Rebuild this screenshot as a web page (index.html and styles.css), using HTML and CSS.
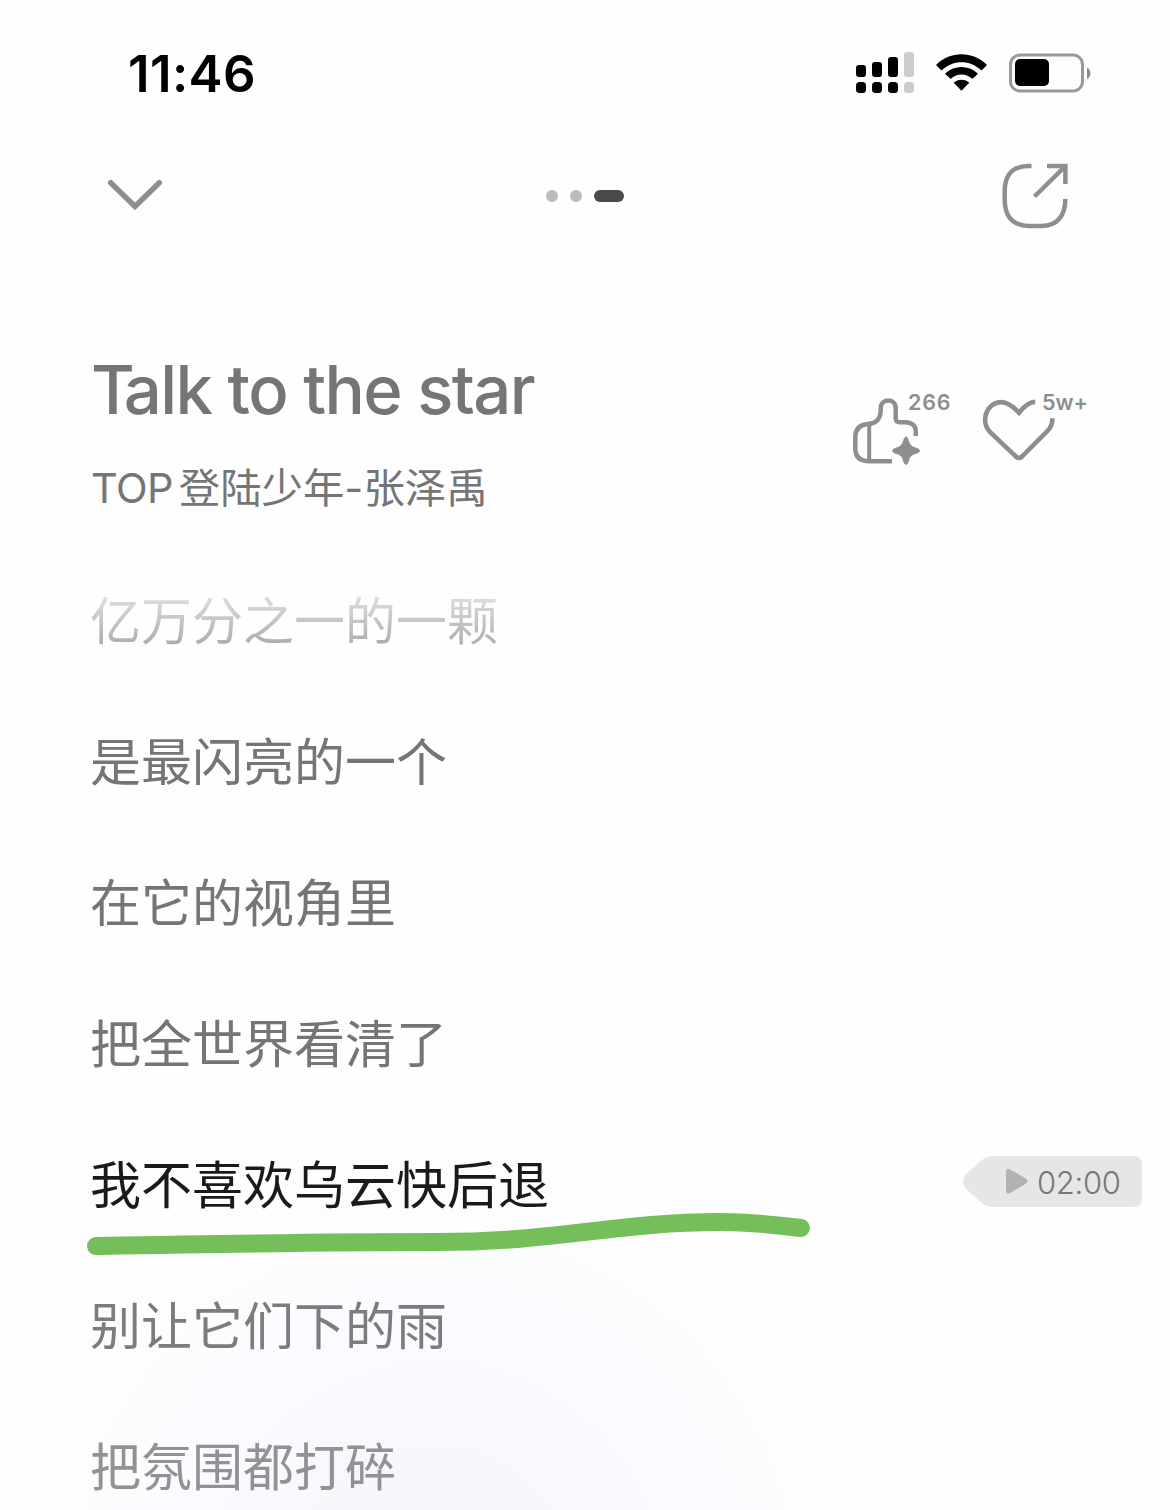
FILE: index.html
```
<!DOCTYPE html>
<html lang="zh-CN">
<head>
  <meta charset="UTF-8">
  <meta name="viewport" content="width=device-width, initial-scale=1.0">
  <title>Talk to the star</title>
  <link rel="stylesheet" href="styles.css">
</head>
<body>
  <div class="player">
    <div class="status-bar">
      <span class="time">11:46</span>
      <div class="status-icons">
        <svg class="signal" width="58" height="42" viewBox="0 0 58 42">
          <rect x="0" y="13" width="10" height="12" rx="3"/>
          <rect x="16" y="10" width="10" height="15" rx="3"/>
          <rect x="32" y="5" width="10" height="20" rx="3"/>
          <rect class="off" x="48" y="0" width="10" height="25" rx="3"/>
          <rect x="0" y="30" width="10" height="11" rx="3.5"/>
          <rect x="16" y="30" width="10" height="11" rx="3.5"/>
          <rect x="32" y="30" width="10" height="11" rx="3.5"/>
          <rect class="off" x="48" y="30" width="10" height="11" rx="3.5"/>
        </svg>
        <svg class="wifi" width="51" height="38" viewBox="0.5 0 51 38">
          <path d="M1 11.5Q0.5 11 1 10.4C15 -3.2 37 -3.2 51 10.4Q51.5 11 51 11.5L46.5 16Q46 16.4 45.4 16C34.5 5.6 17.5 5.6 6.6 16Q6 16.4 5.5 16Z"/>
          <path d="M10 20.3Q9.5 19.8 10 19.3C19 10.8 33 10.8 42 19.3Q42.5 19.8 42 20.3L37.3 24.6Q36.8 25 36.3 24.6C30.5 19.2 21.5 19.2 15.7 24.6Q15.2 25 14.7 24.6Z"/>
          <path d="M18.8 29.2Q18.3 28.6 18.9 28.1C23 24.8 29 24.8 33.1 28.1Q33.7 28.6 33.2 29.2L26.5 36.3Q26 36.7 25.5 36.3Z"/>
        </svg>
        <svg class="battery" width="83" height="40" viewBox="0 0 83 40">
          <rect x="1.5" y="2" width="72" height="36" rx="9.5" fill="none" stroke="#999" stroke-width="3"/>
          <rect x="6" y="6" width="34" height="27" rx="5" fill="#000"/>
          <path d="M78 14.5C82.5 16.5 82.5 24 78 26Z" fill="#8c8c8c"/>
        </svg>
      </div>
    </div>

    <div class="nav">
      <svg class="down" width="56" height="34" viewBox="0 0 56 34" fill="none" stroke="#8e8e8e" stroke-width="5.5" stroke-linecap="round">
        <path d="M3.7 3.7L28 27.5L52.3 3.7"/>
      </svg>
      <div class="pages">
        <i></i><i></i><i class="current"></i>
      </div>
      <svg class="share" width="66" height="66" viewBox="0 0 66 66" fill="none" stroke="#8e8e8e" stroke-width="4.5">
        <path d="M29.5 3H26C9.5 3.5 3 12 2.7 28V37C3 54.5 11 62.5 27 63H40C55 62.5 63 54 63.4 36"/>
        <path d="M45 3H63.4V21M63 3.5L32.5 33.5"/>
      </svg>
    </div>

    <div class="song">
      <div class="song-info">
        <h1><span class="cap">T</span>alk to the star</h1>
        <p><span class="latin">TOP</span>登陆少年-张泽禹</p>
      </div>
      <div class="actions">
        <div class="action like">
          <svg width="68" height="68" viewBox="0 0 68 68" fill="none" stroke="#8e8e8e" stroke-width="4.5">
            <path d="M39 63.2H15C6.5 63 2.5 58.5 2.3 51V39C2.5 30.5 6.5 26.5 15 26C23 25.5 27 22 27.7 13V10C28 0 42.5 0 42.7 10V20C42.7 23.5 44 24.2 47 24.2H52C60.5 24.5 64 28.5 62.5 38"/>
            <path d="M16.2 27V63" stroke-width="4"/>
            <path d="M53 39C54.2 39 55 41 55.3 42.5C56.5 47 58.5 49 63 50.2C65 50.7 66.5 51.5 66.5 52.8C66.5 54 65 54.8 63 55.3C58.5 56.5 56.5 58.5 55.3 63C55 65 54.2 66.3 53 66.3S51 65 50.7 63C49.5 58.5 47.5 56.500 43 55.3C41 54.8 39.7 54 39.7 52.8C39.7 51.5 41 50.7 43 50.2C47.5 49 49.5 47 50.7 42.5C51 41 51.8 39 53 39Z" fill="#8e8e8e" stroke="#8e8e8e" stroke-width="1"/>
          </svg>
          <span>266</span>
        </div>
        <div class="action fav">
          <svg width="74" height="64" viewBox="0 0 74 64" fill="none" stroke="#8e8e8e" stroke-width="4.7">
            <path d="M54 4.5C48 4.5 43.5 8 37.5 15.5C27.5 4.5 18 2 10 8C1.5 15.5 1 27 8 35L34.5 60Q37.5 62.5 40.5 60L65.5 35C70 30.5 71.5 27 71.5 21"/>
          </svg>
          <span>5w+</span>
        </div>
      </div>
    </div>

    <div class="lyrics">
      <p class="fade-top">亿万分之一的一颗</p>
      <p>是最闪亮的一个</p>
      <p>在它的视角里</p>
      <p>把全世界看清了</p>
      <div class="row">
        <p class="active">我不喜欢乌云快后退</p>
        <svg class="marker" width="724" height="44" viewBox="0 0 724 44">
          <path d="M9 34C120 32 230 30 350 30C470 30 530 10 633 10C665 10 690 13 714 16" fill="none"/>
        </svg>
        <div class="seek">
          <svg class="seek-bg" width="180" height="52" viewBox="0 0 180 52">
            <path d="M31 0H171Q180 0 180 9V42Q180 51 171 51H31Q25 51 20 47L4 33Q-2 26 4 18L20 4Q25 0 31 0Z" fill="#e6e6e6"/>
            <path d="M44 15.5Q44 11.5 48 13.2L64 22.8Q67 25.2 64 27.6L48 37Q44 39 44 35Z" fill="#b2b2b2"/>
          </svg>
          <span>02:00</span>
        </div>
      </div>
      <p class="next">别让它们下的雨</p>
      <p class="fade-bottom">把氛围都打碎</p>
    </div>
  </div>
</body>
</html>
```
FILE: styles.css
```
* {
  box-sizing: border-box;
}
body {
  margin: 0;
  background: #fefefe;
  color: #757575;
  font-family: Inter, "Noto Sans CJK SC", sans-serif;
}
svg {
  display: block;
}
h1, p {
  margin: 0;
}
.player {
  height: 1510px;
  overflow: hidden;
  background: radial-gradient(circle at 435px 1590px, #f3f5fc 0, #f6f8fd 140px, #fafcff 290px, #fdfdfe 400px, #fefefe 490px);
}
.status-bar {
  display: flex;
  justify-content: space-between;
  align-items: center;
  height: 146px;
  padding: 0 78px 0 128px;
}
.time {
  color: #000;
  font-size: 51px;
  font-weight: 600;
  letter-spacing: 0.4px;
}
.status-icons {
  display: flex;
  align-items: center;
  gap: 22px;
}
.signal .off {
  fill: #ccc;
}
.nav {
  display: flex;
  justify-content: space-between;
  align-items: center;
  height: 100px;
  padding: 0 102px 0 107px;
}
.pages {
  display: flex;
  gap: 12px;
  margin-left: 4px;
}
.pages i {
  width: 12px;
  height: 12px;
  border-radius: 6px;
  background: #bbb;
}
.pages .current {
  width: 30px;
  background: #4a4a4a;
}
.song {
  display: flex;
  justify-content: space-between;
  height: 305px;
  padding: 104px 82px 0 91px;
}
.song h1 {
  font-size: 67px;
  font-weight: 500;
  line-height: 80px;
  letter-spacing: -1.6px;
  white-space: nowrap;
}
.song .cap {
  letter-spacing: -11px;
}
.song p {
  margin-top: 28px;
  font-size: 41.4px;
  line-height: 60px;
}
.song .latin {
  margin-right: 6px;
  letter-spacing: -0.6px;
}
.actions {
  display: flex;
  gap: 28px;
  padding-top: 47px;
}
.action {
  display: flex;
  align-items: flex-start;
  color: #8e8e8e;
  font-size: 21.5px;
  font-weight: 600;
  line-height: 26px;
}
.action span {
  margin: -8px 0 0 -13px;
  letter-spacing: 0.8px;
}
.like {
  width: 100px;
  padding-top: 1px;
}
.like span {
  margin-top: -9px;
}
.fav {
  width: 106px;
  margin-left: 1px;
}
.fav span {
  letter-spacing: 0;
}
.lyrics {
  display: flex;
  flex-direction: column;
  padding-left: 90px;
  font-size: 51px;
}
.lyrics p {
  height: 141px;
  line-height: 141px;
  white-space: nowrap;
}
.lyrics .fade-top {
  background: linear-gradient(#e8e8e8 25%, #a8a8a8 70%);
  -webkit-background-clip: text;
  background-clip: text;
  color: transparent;
}
.row {
  position: relative;
  display: flex;
  justify-content: space-between;
  align-items: center;
  padding-right: 28px;
}
.lyrics .active {
  color: #1a1a1a;
}
.lyrics .next {
  color: #7c7c7e;
}
.lyrics .fade-bottom {
  color: #929294;
}
/* hand drawn underline over the current line */
.marker {
  position: absolute;
  left: -3px;
  top: 97px;
}
.marker path {
  stroke: #74bf59;
  stroke-width: 18px;
  stroke-linecap: round;
}
.seek {
  display: grid;
  align-items: center;
  margin-bottom: 7px;
}
.seek-bg, .seek span {
  grid-area: 1 / 1;
}
.seek span {
  padding-left: 75px;
  color: #777;
  font-size: 31px;
  font-weight: 300;
  letter-spacing: -0.3px;
}
```
